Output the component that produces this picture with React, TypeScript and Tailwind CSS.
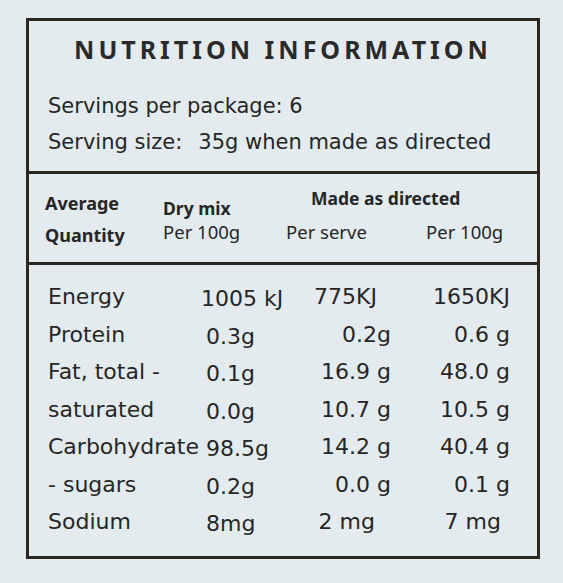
import React from 'react';

type Row = {
  label: string;
  dry: string;
  serve: string;
  per100: string;
  dryClass?: string;
  serveClass?: string;
  per100Class?: string;
};

const rows: Row[] = [
  { label: 'Energy', dry: '1005 kJ', serve: '775KJ', per100: '1650KJ', dryClass: '-ml-[5px]', serveClass: 'pr-[14px]' },
  { label: 'Protein', dry: '0.3g', serve: '0.2g', per100: '0.6 g' },
  { label: 'Fat, total -', dry: '0.1g', serve: '16.9 g', per100: '48.0 g' },
  { label: 'saturated', dry: '0.0g', serve: '10.7 g', per100: '10.5 g' },
  { label: 'Carbohydrate', dry: '98.5g', serve: '14.2 g', per100: '40.4 g' },
  { label: '- sugars', dry: '0.2g', serve: '0.0 g', per100: '0.1 g' },
  { label: 'Sodium', dry: '8mg', serve: '2 mg', per100: '7 mg', serveClass: 'pr-[16px]', per100Class: 'pr-[9px]' },
];

export default function App() {
  return (
    <div className="w-[563px] h-[583px] bg-[#e4ebee] pt-[18px] pl-[26px] text-[#262626] font-['DejaVu_Sans',sans-serif]">
      <div className="w-[514px] h-[541px] border-[3px] border-[#2b2622] flex flex-col">
        {/* Title + servings */}
        <div className="h-[150px] flex flex-col pl-[19px]">
          <div className="h-[58px] flex items-center justify-center pr-[19px] font-['Noto_Sans',sans-serif] font-bold text-[25px] tracking-[4px] text-[#2a2a2a]">
            NUTRITION INFORMATION
          </div>
          <div className="mt-[10px] h-[36px] flex items-center text-[21px]">Servings per package: 6</div>
          <div className="h-[36px] flex items-center text-[21px]">
            <span>Serving size:</span>
            <span className="ml-[16px]">35g when made as directed</span>
          </div>
        </div>

        {/* Column headings */}
        <div className="h-[94px] border-y-[3px] border-[#2b2622] flex font-['Noto_Sans',sans-serif]">
          <div className="w-[134px] pl-[16px] pt-[13px] font-bold text-[18px] leading-[32px]">
            <div>Average</div>
            <div>Quantity</div>
          </div>
          <div className="w-[123px] pt-[23px] leading-[23px]">
            <div className="font-bold text-[17.5px]">Dry mix</div>
            <div className="text-[18.5px]">Per 100g</div>
          </div>
          <div className="flex-1 pt-[12px]">
            <div className="pl-[25px] h-[24px] leading-[24px] font-bold text-[17.5px]">Made as directed</div>
            <div className="mt-[10px] h-[24px] leading-[24px] flex text-[18.5px]">
              <span className="w-[140px]">Per serve</span>
              <span>Per 100g</span>
            </div>
          </div>
        </div>

        {/* Values */}
        <div className="flex-1 pt-[13px] pl-[19px]">
          {rows.map((r) => (
            <div key={r.label} className="h-[37.5px] grid grid-cols-[158px_100px_85px_119px] items-center text-[22px]">
              <span className="whitespace-nowrap">{r.label}</span>
              <span className={`whitespace-nowrap translate-y-[2px] ${r.dryClass ?? ''}`}>{r.dry}</span>
              <span className={`whitespace-nowrap text-right ${r.serveClass ?? ''}`}>{r.serve}</span>
              <span className={`whitespace-nowrap text-right ${r.per100Class ?? ''}`}>{r.per100}</span>
            </div>
          ))}
        </div>
      </div>
    </div>
  );
}
